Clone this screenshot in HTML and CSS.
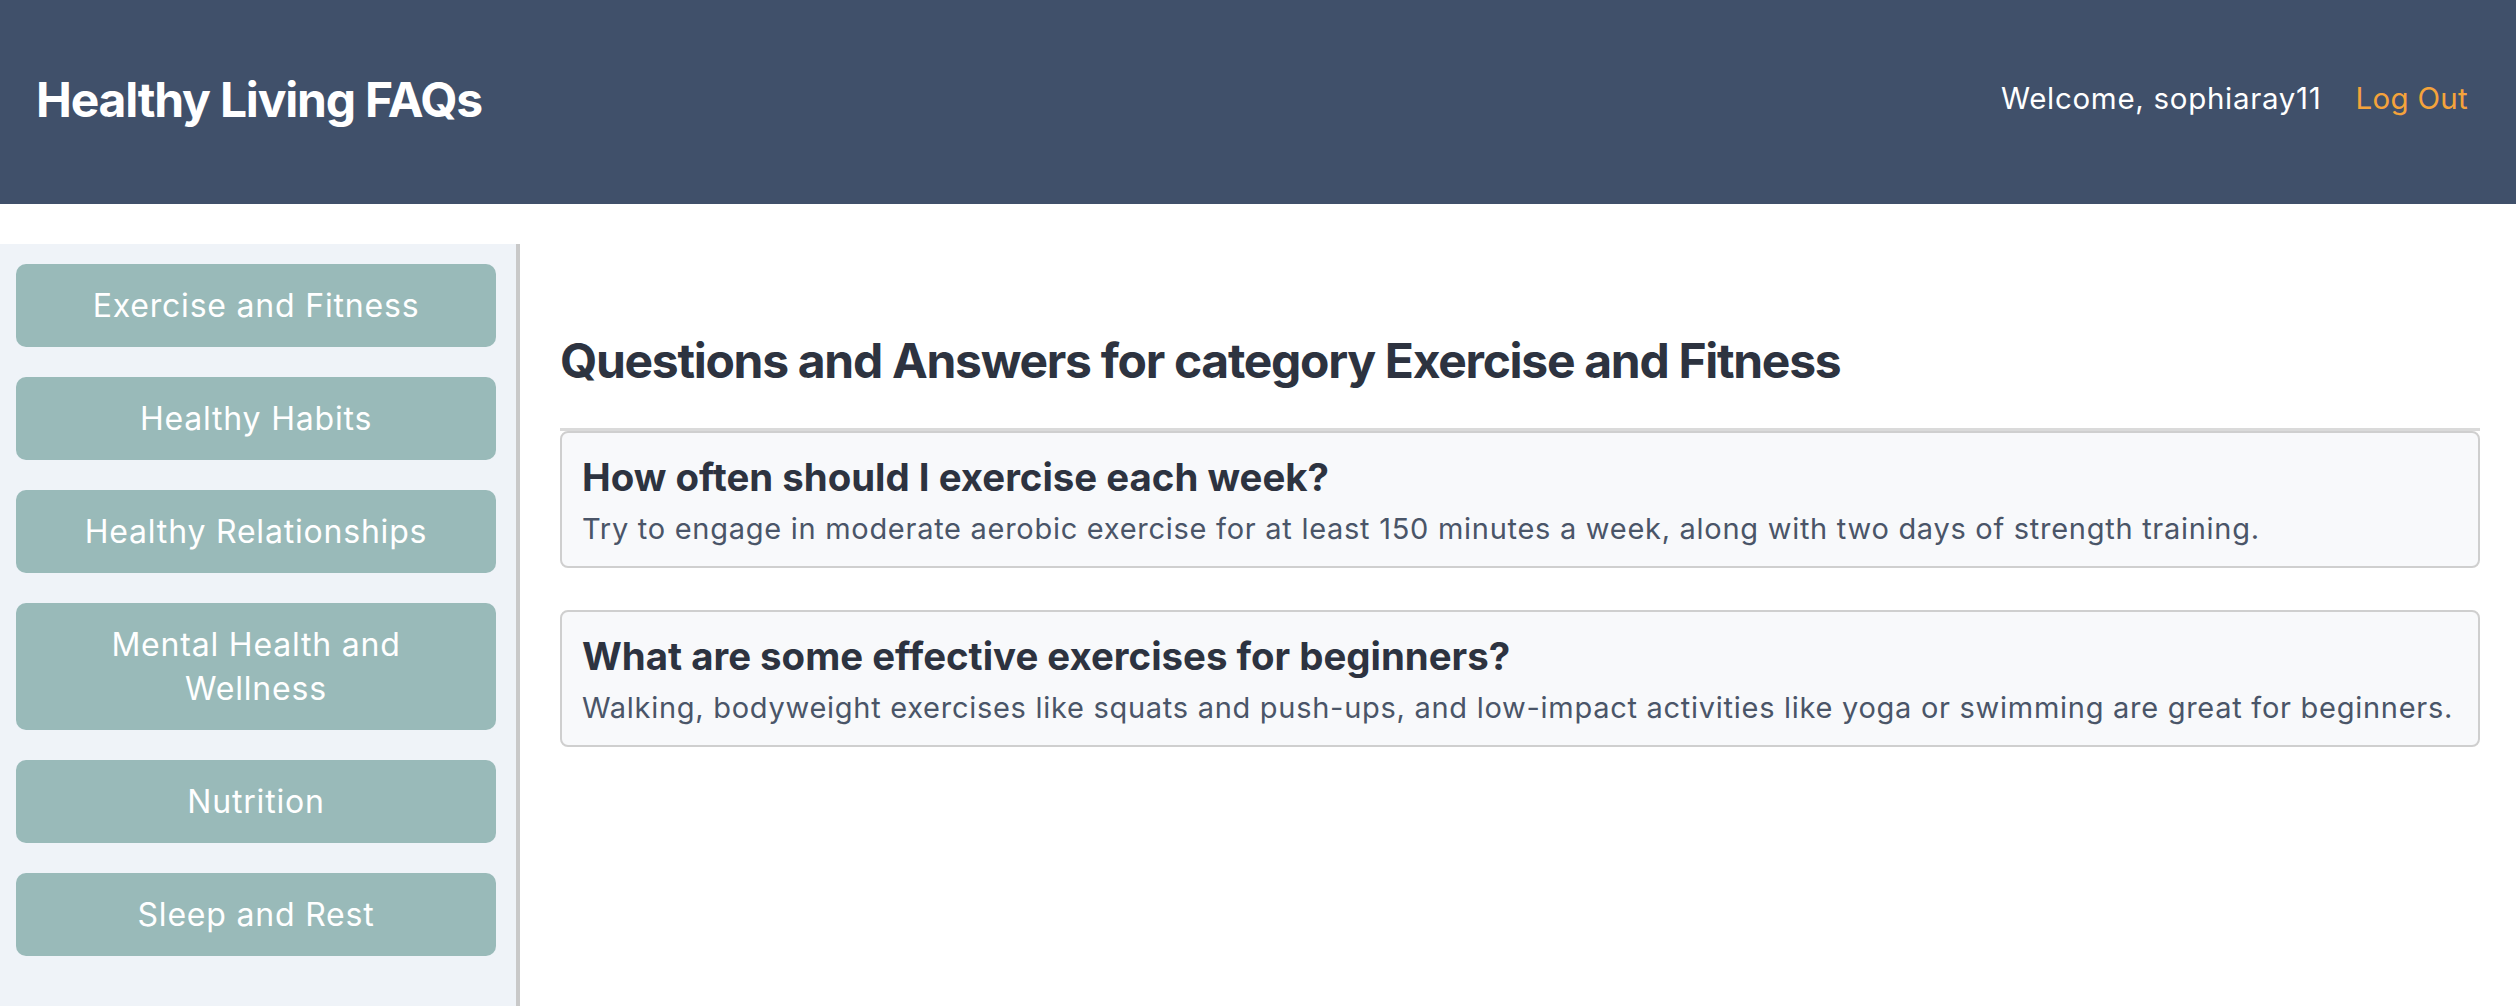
FILE: index.html
```html
<!DOCTYPE html>
<html lang="en">
<head>
<meta charset="utf-8">
<title>Healthy Living FAQs</title>
<link rel="stylesheet" href="styles.css">
</head>
<body>
<div class="page">
  <header class="topbar">
    <h1 class="brand">Healthy Living FAQs</h1>
    <nav class="user-nav">
      <span class="welcome">Welcome, sophiaray11</span>
      <a class="logout" href="#">Log Out</a>
    </nav>
  </header>
  <div class="layout">
    <aside class="sidebar">
      <a class="cat-btn" href="#">Exercise and Fitness</a>
      <a class="cat-btn" href="#">Healthy Habits</a>
      <a class="cat-btn" href="#">Healthy Relationships</a>
      <a class="cat-btn" href="#">Mental Health and Wellness</a>
      <a class="cat-btn" href="#">Nutrition</a>
      <a class="cat-btn" href="#">Sleep and Rest</a>
    </aside>
    <main class="content">
      <h2 class="section-title">Questions and Answers for category Exercise and Fitness</h2>
      <div class="faq-list">
        <div class="faq-card">
          <h3 class="question">How often should I exercise each week?</h3>
          <p class="answer">Try to engage in moderate aerobic exercise for at least 150 minutes a week, along with two days of strength training.</p>
        </div>
        <div class="faq-card">
          <h3 class="question">What are some effective exercises for beginners?</h3>
          <p class="answer">Walking, bodyweight exercises like squats and push-ups, and low-impact activities like yoga or swimming are great for beginners.</p>
        </div>
      </div>
    </main>
  </div>
</div>
</body>
</html>
```

FILE: styles.css
```css
* {
  box-sizing: border-box;
}

html, body {
  margin: 0;
  padding: 0;
}

body {
  font-family: "Inter", "Noto Sans", "Liberation Sans", sans-serif;
  background: #ffffff;
  color: #2d3748;
}

.page {
  display: flex;
  flex-direction: column;
  height: 100vh;
  overflow: hidden;
}

.topbar {
  flex: none;
  height: 204px;
  background: #40506a;
  display: flex;
  align-items: center;
  justify-content: space-between;
  padding: 0 48px 4px 36px;
}

.brand {
  margin: 0;
  font-size: 48px;
  line-height: 57.6px;
  font-weight: 700;
  letter-spacing: -1.2px;
  color: #ffffff;
}

.user-nav {
  display: flex;
  align-items: center;
  gap: 34px;
  font-size: 29.5px;
  line-height: 44px;
  margin-bottom: 5px;
}

.welcome {
  color: #ffffff;
  letter-spacing: 0.7px;
}

.logout {
  color: #f5a33b;
  text-decoration: none;
  letter-spacing: 0.3px;
}

.layout {
  flex: 1;
  display: flex;
  padding-top: 40px;
  min-height: 0;
}

.sidebar {
  flex: none;
  width: 520px;
  background: #eff3f8;
  border-right: 4px solid #c9c9c9;
  padding: 20px 20px 20px 16px;
  display: flex;
  flex-direction: column;
  gap: 30px;
}

.cat-btn {
  display: block;
  background: #99bab9;
  color: #ffffff;
  text-decoration: none;
  text-align: center;
  border-radius: 10px;
  font-size: 32px;
  line-height: 44px;
  letter-spacing: 0.8px;
  padding: 19.5px 28px;
}

.content {
  flex: 1;
  min-width: 0;
  padding: 0 36px 0 40px;
}

.section-title {
  margin: 88px 0 38px;
  font-size: 48px;
  line-height: 57.6px;
  font-weight: 700;
  letter-spacing: -1.3px;
  color: #2d3340;
}

.faq-list {
  border-top: 3px solid #dadada;
  display: flex;
  flex-direction: column;
  gap: 42px;
}

.faq-card {
  background: #f8f9fb;
  border: 2px solid #cfcfcf;
  border-radius: 8px;
  padding: 20px 8px 17px 20px;
}

.question {
  margin: 0 0 8px;
  font-size: 38.4px;
  line-height: 48px;
  font-weight: 700;
  color: #2d3340;
}

.answer {
  margin: 0;
  font-size: 29px;
  line-height: 40px;
  letter-spacing: 0.72px;
  color: #4a5568;
}
```
